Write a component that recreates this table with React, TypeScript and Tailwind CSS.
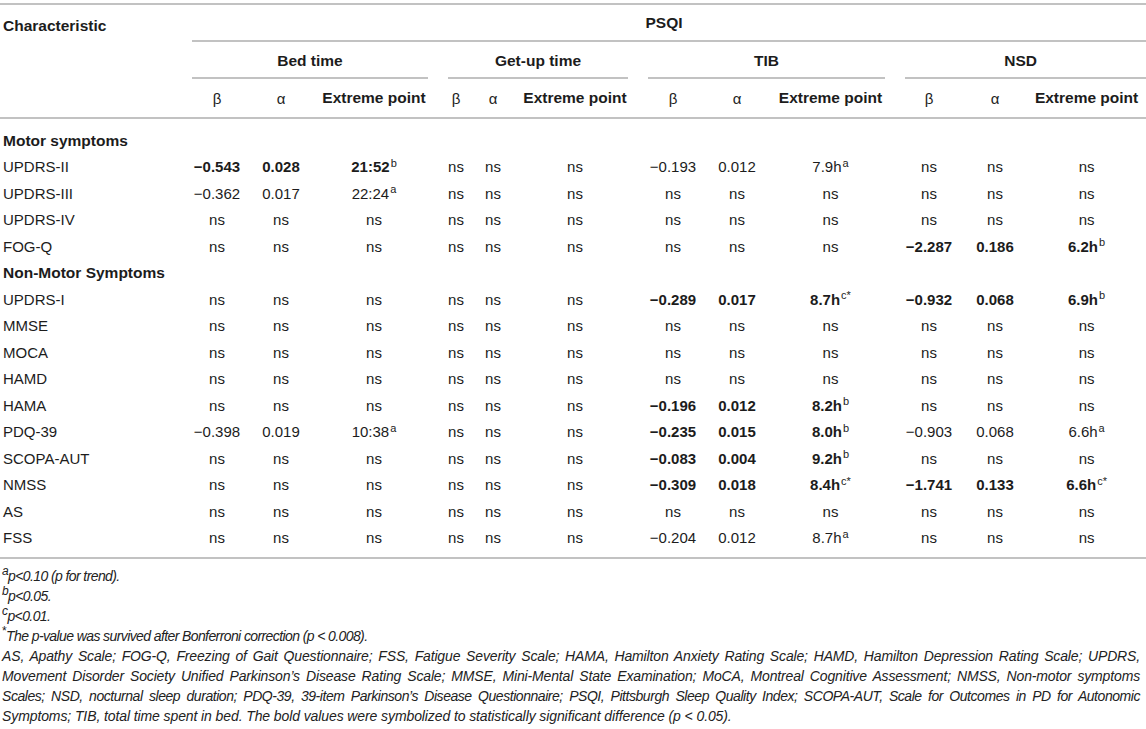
import React from 'react'

type Cell = { v: string; sup?: string; b?: boolean }

const ns: Cell = { v: 'ns' }
const n3: Cell[] = [ns, ns, ns]

const c = (v: string, sup?: string): Cell => ({ v, sup })
const b = (v: string, sup?: string): Cell => ({ v, sup, b: true })

type Row = { label: string; section?: boolean; cells?: Cell[] }

const rows: Row[] = [
  { label: 'Motor symptoms', section: true },
  { label: 'UPDRS-II', cells: [b('−0.543'), b('0.028'), b('21:52', 'b'), ...n3, c('−0.193'), c('0.012'), c('7.9h', 'a'), ...n3] },
  { label: 'UPDRS-III', cells: [c('−0.362'), c('0.017'), c('22:24', 'a'), ...n3, ...n3, ...n3] },
  { label: 'UPDRS-IV', cells: [...n3, ...n3, ...n3, ...n3] },
  { label: 'FOG-Q', cells: [...n3, ...n3, ...n3, b('−2.287'), b('0.186'), b('6.2h', 'b')] },
  { label: 'Non-Motor Symptoms', section: true },
  { label: 'UPDRS-I', cells: [...n3, ...n3, b('−0.289'), b('0.017'), b('8.7h', 'c*'), b('−0.932'), b('0.068'), b('6.9h', 'b')] },
  { label: 'MMSE', cells: [...n3, ...n3, ...n3, ...n3] },
  { label: 'MOCA', cells: [...n3, ...n3, ...n3, ...n3] },
  { label: 'HAMD', cells: [...n3, ...n3, ...n3, ...n3] },
  { label: 'HAMA', cells: [...n3, ...n3, b('−0.196'), b('0.012'), b('8.2h', 'b'), ...n3] },
  { label: 'PDQ-39', cells: [c('−0.398'), c('0.019'), c('10:38', 'a'), ...n3, b('−0.235'), b('0.015'), b('8.0h', 'b'), c('−0.903'), c('0.068'), c('6.6h', 'a')] },
  { label: 'SCOPA-AUT', cells: [...n3, ...n3, b('−0.083'), b('0.004'), b('9.2h', 'b'), ...n3] },
  { label: 'NMSS', cells: [...n3, ...n3, b('−0.309'), b('0.018'), b('8.4h', 'c*'), b('−1.741'), b('0.133'), b('6.6h', 'c*')] },
  { label: 'AS', cells: [...n3, ...n3, ...n3, ...n3] },
  { label: 'FSS', cells: [...n3, ...n3, c('−0.204'), c('0.012'), c('8.7h', 'a'), ...n3] },
]

const widths = [182, 70, 58, 128, 36, 38, 126, 70, 58, 129, 68, 64, 119]

const groups = [
  { name: 'Bed time', line: 'mx-[10px]' },
  { name: 'Get-up time', line: 'mx-[10px]' },
  { name: 'TIB', line: 'mx-[10px]' },
  { name: 'NSD', line: 'ml-[10px]' },
]

const line = 'h-[2px] bg-[#c2c2c2]'
const justified = 'text-justify [text-align-last:justify]'

export default function App() {
  return (
    <div className="w-[1146px] bg-white pt-[3px] text-[#1c1c1c] font-['Liberation_Sans',Arial,sans-serif] overflow-hidden">
      <table className="w-[1146px] table-fixed border-collapse text-[15px] leading-none">
        <colgroup>
          {widths.map((w, i) => (
            <col key={i} style={{ width: w }} />
          ))}
        </colgroup>
        <thead className="text-[15.5px]">
          <tr className="border-t-2 border-[#c2c2c2]">
            <th rowSpan={3} className="p-0 pl-[3px] pt-[13px] align-top text-left font-bold border-b-2 border-[#c2c2c2]">
              Characteristic
            </th>
            <th colSpan={12} className="p-0 align-bottom font-bold">
              <div className="h-[35px] flex items-center justify-center">PSQI</div>
              <div className={`ml-[10px] ${line}`} />
            </th>
          </tr>
          <tr>
            {groups.map(g => (
              <th key={g.name} colSpan={3} className="p-0 align-bottom font-bold">
                <div className="h-[35px] pt-[2px] flex items-center justify-center">{g.name}</div>
                <div className={`${g.line} ${line}`} />
              </th>
            ))}
          </tr>
          <tr className="border-b-2 border-[#c2c2c2]">
            {groups.map(g => (
              <React.Fragment key={g.name}>
                <th className="p-0 h-[39px] text-center font-normal text-[15px]">β</th>
                <th className="p-0 h-[39px] text-center font-normal text-[15px]">α</th>
                <th className="p-0 h-[39px] text-center font-bold whitespace-nowrap">Extreme point</th>
              </React.Fragment>
            ))}
          </tr>
        </thead>
        <tbody className="border-b-2 border-[#c2c2c2]">
          <tr className="h-[9px]">
            <td colSpan={13} className="p-0" />
          </tr>
          {rows.map(r => (
            <tr key={r.label} className="h-[26.5px]">
              {r.section ? (
                <td colSpan={13} className="p-0 pl-[3px] font-bold text-[15.5px] whitespace-nowrap">{r.label}</td>
              ) : (
                <>
                  <td className="p-0 pl-[3px] whitespace-nowrap">{r.label}</td>
                  {r.cells!.map((cell, i) => (
                    <td key={i} className={`p-0 text-center whitespace-nowrap ${cell.b ? 'font-bold' : ''}`}>
                      {cell.v}
                      {cell.sup && <sup className="text-[11px] font-normal ml-px">{cell.sup}</sup>}
                    </td>
                  ))}
                </>
              )}
            </tr>
          ))}
          <tr className="h-[7px]">
            <td colSpan={13} className="p-0" />
          </tr>
        </tbody>
      </table>

      <div className="pt-[7px] pl-[2px] pr-[6px] text-[14px] leading-[20px] italic tracking-[-0.6px] text-[#222]">
        <p><sup className="text-[12px]">a</sup>p&lt;0.10 (p for trend).</p>
        <p><sup className="text-[12px]">b</sup>p&lt;0.05.</p>
        <p><sup className="text-[12px]">c</sup>p&lt;0.01.</p>
        <p><sup className="text-[12px] not-italic">*</sup>The p-value was survived after Bonferroni correction (p &lt; 0.008).</p>
        <p className={`${justified} tracking-[-0.15px]`}>
          AS, Apathy Scale; FOG-Q, Freezing of Gait Questionnaire; FSS, Fatigue Severity Scale; HAMA, Hamilton Anxiety Rating Scale; HAMD, Hamilton Depression Rating Scale; UPDRS,
        </p>
        <p className={`${justified} tracking-[-0.15px]`}>
          Movement Disorder Society Unified Parkinson’s Disease Rating Scale; MMSE, Mini-Mental State Examination; MoCA, Montreal Cognitive Assessment; NMSS, Non-motor symptoms
        </p>
        <p className={`${justified} tracking-[-0.45px]`}>
          Scales; NSD, nocturnal sleep duration; PDQ-39, 39-item Parkinson’s Disease Questionnaire; PSQI, Pittsburgh Sleep Quality Index; SCOPA-AUT, Scale for Outcomes in PD for Autonomic
        </p>
        <p className="tracking-[-0.1px]">
          Symptoms; TIB, total time spent in bed. The bold values were symbolized to statistically significant difference (p &lt; 0.05).
        </p>
      </div>
    </div>
  )
}
